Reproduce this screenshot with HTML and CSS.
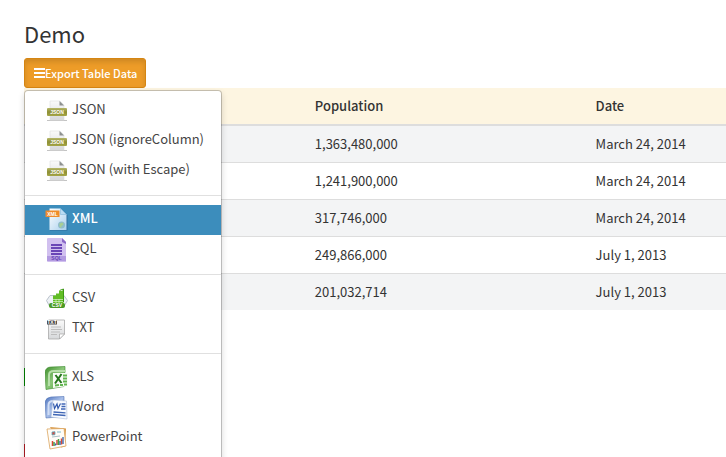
FILE: index.html
```html
<!DOCTYPE html>
<html lang="en">
<head>
<meta charset="utf-8">
<title>Demo</title>
<link rel="stylesheet" href="styles.css">
</head>
<body>
<svg class="defs" width="0" height="0" aria-hidden="true">
  <defs>
    <linearGradient id="paper" x1="0" y1="0" x2="0" y2="1"><stop offset="0" stop-color="#fafafa"/><stop offset="1" stop-color="#d6d8da"/></linearGradient>
    <linearGradient id="olive" x1="0" y1="0" x2="0" y2="1"><stop offset="0" stop-color="#b5b668"/><stop offset=".5" stop-color="#8d8f35"/><stop offset="1" stop-color="#a5a648"/></linearGradient>
    <linearGradient id="sky" x1="0" y1="0" x2="1" y2="1"><stop offset="0" stop-color="#ffffff"/><stop offset="1" stop-color="#a9d0ee"/></linearGradient>
    <linearGradient id="green" x1="0" y1="0" x2="1" y2="1"><stop offset="0" stop-color="#3f8f2d"/><stop offset=".5" stop-color="#8cc87a"/><stop offset="1" stop-color="#3f9a30"/></linearGradient>
    <linearGradient id="blue" x1="0" y1="0" x2="1" y2="1"><stop offset="0" stop-color="#4f74bd"/><stop offset=".5" stop-color="#a9c0ea"/><stop offset="1" stop-color="#4266b2"/></linearGradient>
    <symbol id="json" viewBox="0 0 24 24">
      <path d="M2 21.5h20" stroke="#c4c4c4"/>
      <path d="M5 2h10l4 4v15H5z" fill="url(#paper)" stroke="#dcdddd" stroke-width=".6"/>
      <path d="M14.5 2l4.500 4.500h-4.500z" fill="#8d9090"/>
      <rect x="2" y="9" width="20" height="8" rx="1" fill="url(#olive)"/>
      <text x="12" y="15" text-anchor="middle" class="icon-label">JSON</text>
    </symbol>
  </defs>
</svg>
<main class="page">
  <h1 class="title">Demo</h1>
  <div class="export">
    <button class="export-button" type="button" aria-expanded="true" aria-controls="formats">
      <svg width="12" height="12" viewBox="0 0 12 12" aria-hidden="true"><path d="M1 2h11M1 6h11M1 10h11" stroke="#fff" stroke-width="2"/></svg>Export Table Data</button>
    <ul class="menu" id="formats">
      <li><a href="#"><svg class="icon"><use href="#json"/></svg>JSON</a></li>
      <li><a href="#"><svg class="icon"><use href="#json"/></svg>JSON (ignoreColumn)</a></li>
      <li><a href="#"><svg class="icon"><use href="#json"/></svg>JSON (with Escape)</a></li>
      <li class="divider"></li>
      <li><a href="#" class="active"><svg class="icon" viewBox="0 0 24 24">
        <path d="M5 1h11l6.500 6v15.500H5z" fill="#2c6c9c"/>
        <path d="M4.500.5h11l6 6V22h-17z" fill="url(#sky)"/>
        <path d="M15.500.5v6h6z" fill="#b9dcf3" stroke="#76aed3" stroke-width=".5"/>
        <circle cx="16.500" cy="17" r="3.500" fill="#8fbccb"/><path d="M14.500 15.500l3-1 1 2-2 1.500-.5 2-1.500-1.500z" fill="#a7ce93"/>
        <rect x=".5" y="2.500" width="14" height="6.500" fill="#ef8c2a"/>
        <text x="7.500" y="7.600" text-anchor="middle" class="icon-label">XML</text></svg>XML</a></li>
      <li><a href="#"><svg class="icon" viewBox="0 0 24 24">
        <path d="M3 0h14l4 4v20H3a1 1 0 0 1-1-1V1a1 1 0 0 1 1-1z" fill="#d1c0ef"/>
        <path d="M17 0l4 4v2l-4-2z" fill="#8a68c8"/>
        <path d="M6 7h11M6 10h11M6 13h11M6 16h11" stroke="#6a45b6" stroke-width="2"/>
        <path d="M2 18h19v5H2z" fill="#b39be1"/>
        <text x="11.500" y="22.200" text-anchor="middle" class="icon-label violet">SQL</text></svg>SQL</a></li>
      <li class="divider"></li>
      <li><a href="#"><svg class="icon" viewBox="0 0 24 24">
        <path d="M5 8.500h14l3.500 5-4 6.500H5L1.500 13.500z" fill="#eef2f5" stroke="#b9c1cb"/>
        <path d="M8 17V8.500h3V6.500h3V4h3l1.500-2V17z" fill="#61bd25"/>
        <path d="M14.500 3.500L18.500 2v13" fill="none" stroke="#3c9815"/>
        <path d="M8 12.500h10M8 14.500h10M11 12v4M14 12v4" stroke="#d9f1ca" stroke-width=".7"/>
        <rect x="4" y="16" width="16" height="5" rx="2" fill="#4a9a25"/>
        <text x="12" y="20.400" text-anchor="middle" class="icon-label">CSV</text></svg>CSV</a></li>
      <li><a href="#"><svg class="icon" viewBox="0 0 24 24">
        <path d="M3.500 3h16v14l-5 5h-11z" fill="url(#paper)" stroke="#aaa" stroke-width=".8"/>
        <path d="M14.500 22v-5h5z" fill="#fff" stroke="#999" stroke-width=".6"/>
        <path d="M6 10h10M6 12.500h11M6 15h9M6 17.500h6" stroke="#b8b8b8" stroke-width=".9"/>
        <rect x="2" y="3" width="10" height="4.500" fill="#4b4b4b"/>
        <text x="7" y="7" text-anchor="middle" class="icon-label">TXT</text></svg>TXT</a></li>
      <li class="divider"></li>
      <li><a href="#"><svg class="icon" viewBox="0 0 24 24">
        <path d="M0 6Q1 1 6 1L20 .5V4L19 20.500 1 23.500z" fill="url(#green)" stroke="#3b892b" stroke-width=".6"/>
        <path d="M4 20V9q0-4 5-4h12" fill="none" stroke="#b7dfaa" stroke-width="2"/>
        <path d="M8 7h15v13L8 22z" fill="#f8fcf6"/>
        <path d="M18 9.500h4M18 12.500h4M18 15.500h4M10 19.500l4-.5M15 19h3M19 18.500h3" stroke="#62b550" stroke-width="1.800"/>
        <path d="M10.500 9l6 8M16.500 8l-6.500 9.500" stroke="#24751b" stroke-width="2"/></svg>XLS</a></li>
      <li><a href="#"><svg class="icon" viewBox="0 0 24 24">
        <path d="M0 6Q1 1.500 6 1L19 .5v20L1 22z" fill="url(#blue)" stroke="#5374b5" stroke-width=".6"/>
        <path d="M3.500 19V9q0-4 5-4h9" fill="none" stroke="#d1def5" stroke-width="2"/>
        <path d="M8 4l13.500 1L22 23 6 21z" fill="#f9fbff" stroke="#a9bad8" stroke-width=".6"/>
        <path d="M8.500 7.500l1 5 2.500-4.500 1 4.500 2.500-5" fill="none" stroke="#3159ad" stroke-width="1.200"/>
        <path d="M16.500 8h4M16.500 10.500h4M16 13h4.500M8.500 16l12 .8M8 18.500l12.500 1" stroke="#4067b6" stroke-width="1.300"/></svg>Word</a></li>
      <li><a href="#"><svg class="icon" viewBox="0 0 24 24">
        <path d="M5 1l16 1.500-1 18-4 1z" fill="#d99a4a"/>
        <path d="M2 3l17-.5L21 20 5 23z" fill="#fffdf8" stroke="#dca45d" stroke-width=".8"/>
        <path d="M7 6l3-.3v3L7 9zM12 6h4" fill="#d65042" stroke="#58a8bd" stroke-width=".8"/>
        <path d="M7 11l8-1" stroke="#aac3ca"/>
        <path d="M7.500 20v-5M12 19v-5M16.500 18.500v-6" stroke="#d94835" stroke-width="1.500"/>
        <path d="M9 20v-4M13.500 19v-6" stroke="#469e45" stroke-width="1.500"/>
        <path d="M10.500 19.500v-2M15 19v-4M18 18v-7" stroke="#345fa8" stroke-width="1.300"/></svg>PowerPoint</a></li>
    </ul>
  </div>
  <table class="data">
    <colgroup><col class="wide"><col class="wide"><col></colgroup>
    <thead><tr><td></td><th scope="col">Population</th><th scope="col">Date</th></tr></thead>
    <tbody>
      <tr><td></td><td>1,363,480,000</td><td>March 24, 2014</td></tr>
      <tr><td></td><td>1,241,900,000</td><td>March 24, 2014</td></tr>
      <tr><td></td><td>317,746,000</td><td>March 24, 2014</td></tr>
      <tr><td></td><td>249,866,000</td><td>July 1, 2013</td></tr>
      <tr><td></td><td>201,032,714</td><td>July 1, 2013</td></tr>
    </tbody>
  </table>
  <div class="marker success"></div>
  <div class="marker danger"></div>
</main>
</body>
</html>
```
FILE: styles.css
```css
* { box-sizing: border-box; }
html { height: 100%; overflow: hidden; }
body {
  margin: 0;
  height: 100%;
  overflow: hidden;
  background: #fff;
  color: #333;
  font: 13px/20px "Noto Sans CJK SC", "Open Sans", sans-serif;
}
.defs { position: absolute; }
.page { padding: 20px 0 0 24px; }
.title { margin: 0 0 12px; font-size: 22px; line-height: 26px; font-weight: 400; }
.export { position: relative; display: flex; }
.export-button {
  display: flex;
  align-items: center;
  height: 30px;
  padding: 0 8px;
  border: 1px solid #d58512;
  border-radius: 3px;
  background: #ed9c28;
  box-shadow: inset 0 3px 5px rgba(0, 0, 0, .125);
  color: #fff;
  font: 500 11px/18px "Noto Sans CJK SC", "Open Sans", sans-serif;
  white-space: nowrap;
}
.menu {
  position: absolute;
  top: 32px;
  left: 0;
  z-index: 1;
  min-width: 198px;
  margin: 0;
  padding: 5px 0 20px;
  list-style: none;
  background: #fff;
  background-clip: padding-box;
  border: 1px solid rgba(0, 0, 0, .2);
  border-radius: 4px;
  box-shadow: 0 3px 6px rgba(0, 0, 0, .15);
}
.menu a {
  display: flex;
  align-items: flex-start;
  gap: 3px;
  height: 30px;
  padding: 0 16px 0 20px;
  color: #444;
  line-height: 26px;
  text-decoration: none;
  white-space: nowrap;
}
.menu .active { background: #3c8dbc; color: #fff; font-weight: 500; }
.divider { height: 1px; margin: 9px 0; background: #e0e0e0; }
.icon { flex: none; width: 24px; height: 24px; margin-top: 3px; }
.icon-label { font: bold 5px "Liberation Sans", sans-serif; fill: #fff; }
.violet { fill: #6a45b6; }
.data { width: 100%; table-layout: fixed; border-collapse: separate; border-spacing: 0; }
.wide { width: 40%; }
.data td, .data th { height: 37px; padding: 0 10px; text-align: left; }
.data thead td, .data thead th {
  height: 38px;
  background: #fdf5e1;
  border-bottom: 2px solid #ddd;
  font-weight: 500;
}
.data tbody td { border-top: 1px solid #ddd; }
.data tbody tr:first-child td { height: 36px; border-top: 0; }
.data tbody tr:nth-child(odd) { background: #f3f4f5; }
.marker { width: 80px; margin-top: 58px; border-left: 1px solid; }
.success { height: 18px; border-color: #00a000; }
.danger { height: 30px; border-color: #d9232c; }
```
